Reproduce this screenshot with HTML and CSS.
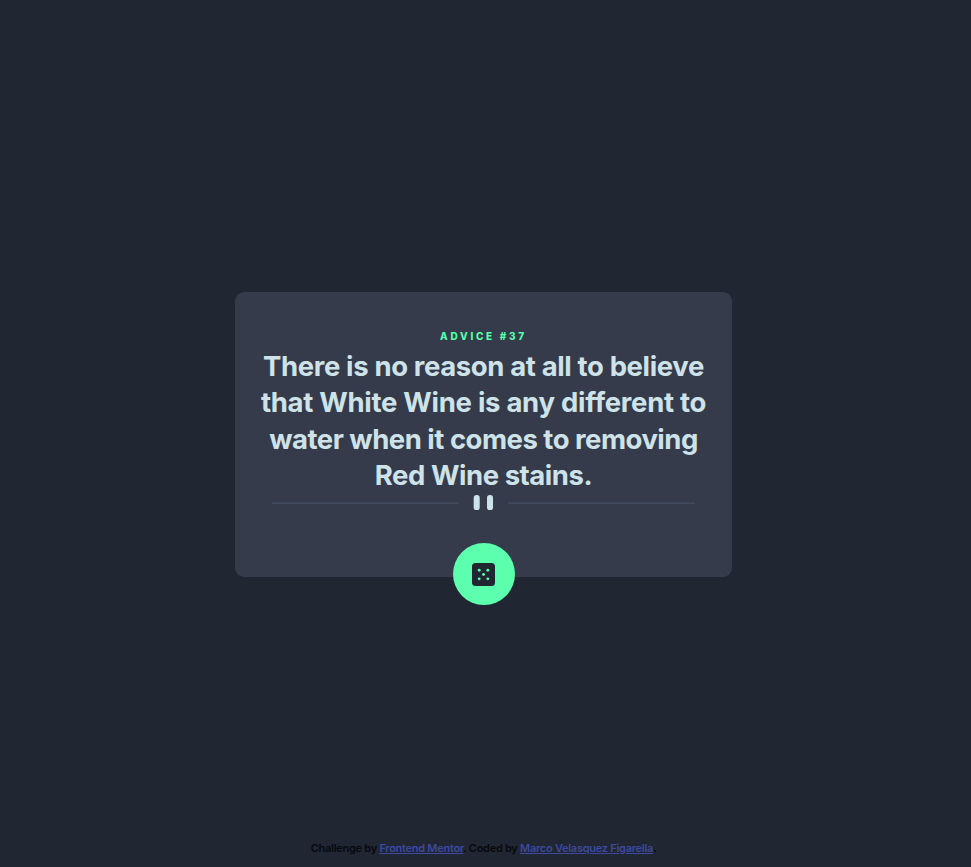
FILE: index.html
```html
<!DOCTYPE html>
<html lang="en">
<head>
<meta charset="utf-8">
<title>Advice generator</title>
<link rel="stylesheet" href="styles.css">
</head>
<body>
<main>
  <section class="card">
    <h1 class="label">ADVICE #37</h1>
    <p class="quote">
      <span class="line line-1">There is no reason at all to believe</span>
      <span class="line line-2">that White Wine is any different to</span>
      <span class="line line-3">water when it comes to removing</span>
      <span class="line line-4">Red Wine stains.</span>
    </p>
    <svg class="divider" viewBox="0 0 444 16" aria-hidden="true">
      <path fill="#4f5d74" d="M0 8h196v1H0zM248 8h196v1H248z"/>
      <g fill="#cee3e9"><rect x="211.7" width="6.3" height="16" rx="3"/><rect x="225.7" width="6.3" height="16" rx="3"/></g>
    </svg>
    <button class="dice" aria-label="New advice">
      <svg width="23" height="23" viewBox="0 0 24 24" aria-hidden="true">
        <rect width="24" height="24" rx="3.7" fill="#202733"/>
        <g fill="#53ffaa"><circle cx="7.5" cy="7.5" r="1.5"/><circle cx="16.5" cy="7.5" r="1.5"/><circle cx="12" cy="12" r="1.5"/><circle cx="7.5" cy="16.5" r="1.5"/><circle cx="16.5" cy="16.5" r="1.5"/></g>
      </svg>
    </button>
  </section>
</main>
<footer>Challenge by <a href="#">Frontend Mentor</a>. Coded by <a href="#">Marco Velasquez Figarella</a>.</footer>
</body>
</html>
```
FILE: styles.css
```css
* { box-sizing: border-box; }
body {
  margin: 0;
  height: 867px;
  display: flex;
  flex-direction: column;
  background: #202632;
  font-family: Inter, sans-serif;
  overflow: hidden;
}
main {
  flex: 1;
  padding: 292px 0 0 235px;
}
.card {
  position: relative;
  width: 497px;
  height: 284.5px;
  padding-top: 37px;
  display: flex;
  flex-direction: column;
  align-items: center;
  border-radius: 9px;
  background: #353b4a;
}
.label {
  margin: 0;
  font-size: 10px;
  line-height: 15px;
  font-weight: 800;
  letter-spacing: 2.7px;
  color: #53ffaa;
}
.quote {
  margin: 4px 0 0;
  font-size: 27.5px;
  line-height: 36.3px;
  font-weight: 700;
  color: #cee3e9;
  text-align: center;
  white-space: nowrap;
}
.line { display: block; }
.line-1 { letter-spacing: -0.37px; }
.line-2 { letter-spacing: -0.29px; }
.line-3 { letter-spacing: -0.5px; }
.line-4 { letter-spacing: -0.46px; }
.divider {
  width: 423px;
  height: 15.3px;
  margin-top: 1.5px;
}
.dice {
  position: absolute;
  left: 217.5px;
  bottom: -28.9px;
  width: 62px;
  height: 62px;
  padding: 0;
  display: grid;
  place-items: center;
  border: 0;
  border-radius: 50%;
  background: #5cffad;
}
footer {
  height: 26px;
  padding-right: 4px;
  text-align: center;
  font-size: 11px;
  line-height: 15px;
  font-weight: 600;
  letter-spacing: -0.27px;
  color: #07090d;
}
footer a { color: #3d499e; }
```
